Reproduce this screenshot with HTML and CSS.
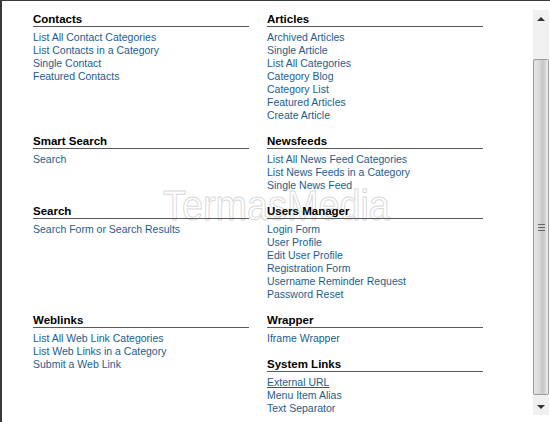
FILE: index.html
```html
<html>

<head>
    <link rel="stylesheet" href="styles.css">
</head>

<body>
    <div class="frame">
        <div class="watermark">TermasMedia</div>

        <div class="content">
            <div class="menu-grid">
                <div class="menu-cell">
                    <div class="menu-type">
                        <h3>Contacts</h3>
                        <ul>
                            <li><a href="#">List All Contact Categories</a></li>
                            <li><a href="#">List Contacts in a Category</a></li>
                            <li><a href="#">Single Contact</a></li>
                            <li><a href="#">Featured Contacts</a></li>
                        </ul>
                    </div>
                </div>
                <div class="menu-cell">
                    <div class="menu-type">
                        <h3>Articles</h3>
                        <ul>
                            <li><a href="#">Archived Articles</a></li>
                            <li><a href="#">Single Article</a></li>
                            <li><a href="#">List All Categories</a></li>
                            <li><a href="#">Category Blog</a></li>
                            <li><a href="#">Category List</a></li>
                            <li><a href="#">Featured Articles</a></li>
                            <li><a href="#">Create Article</a></li>
                        </ul>
                    </div>
                </div>

                <div class="menu-cell">
                    <div class="menu-type">
                        <h3>Smart Search</h3>
                        <ul>
                            <li><a href="#">Search</a></li>
                        </ul>
                    </div>
                </div>
                <div class="menu-cell">
                    <div class="menu-type">
                        <h3>Newsfeeds</h3>
                        <ul>
                            <li><a href="#">List All News Feed Categories</a></li>
                            <li><a href="#">List News Feeds in a Category</a></li>
                            <li><a href="#">Single News Feed</a></li>
                        </ul>
                    </div>
                </div>

                <div class="menu-cell">
                    <div class="menu-type">
                        <h3>Search</h3>
                        <ul>
                            <li><a href="#">Search Form or Search Results</a></li>
                        </ul>
                    </div>
                </div>
                <div class="menu-cell">
                    <div class="menu-type">
                        <h3>Users Manager</h3>
                        <ul>
                            <li><a href="#">Login Form</a></li>
                            <li><a href="#">User Profile</a></li>
                            <li><a href="#">Edit User Profile</a></li>
                            <li><a href="#">Registration Form</a></li>
                            <li><a href="#">Username Reminder Request</a></li>
                            <li><a href="#">Password Reset</a></li>
                        </ul>
                    </div>
                </div>

                <div class="menu-cell">
                    <div class="menu-type">
                        <h3>Weblinks</h3>
                        <ul>
                            <li><a href="#">List All Web Link Categories</a></li>
                            <li><a href="#">List Web Links in a Category</a></li>
                            <li><a href="#">Submit a Web Link</a></li>
                        </ul>
                    </div>
                </div>
                <div class="menu-cell">
                    <div class="menu-type">
                        <h3>Wrapper</h3>
                        <ul>
                            <li><a href="#">Iframe Wrapper</a></li>
                        </ul>
                    </div>
                    <div class="menu-type">
                        <h3>System Links</h3>
                        <ul>
                            <li><a href="#" class="active">External URL</a></li>
                            <li><a href="#">Menu Item Alias</a></li>
                            <li><a href="#">Text Separator</a></li>
                        </ul>
                    </div>
                </div>
            </div>
        </div>

        <div class="scrollbar">
            <div class="sb-button"><span class="arrow-up"></span></div>
            <div class="sb-track">
                <div class="sb-thumb">
                    <div class="grip">
                        <span></span>
                        <span></span>
                        <span></span>
                    </div>
                </div>
            </div>
            <div class="sb-button"><span class="arrow-down"></span></div>
        </div>
    </div>
</body>

</html>
```

FILE: styles.css
```css
body {
    margin: 0;
    padding: 0;
    background-color: #fff;
    font-family: "Liberation Sans", Arial, sans-serif;
}

.frame {
    position: relative;
    display: flex;
    height: 422px;
    box-sizing: border-box;
    border-left: 2px solid #3a3a3a;
    border-top: 1px solid #3a3a3a;
    overflow: hidden;
}

.watermark {
    position: absolute;
    left: 161px;
    top: 184px;
    font-size: 42px;
    line-height: 1;
    color: #fff;
    -webkit-text-stroke: 1px #d8d8d8;
    transform: scaleX(0.9);
    transform-origin: left top;
    white-space: nowrap;
}

.content {
    position: relative;
    flex: 1;
    padding: 11px 0 0 31px;
}

.menu-grid {
    display: grid;
    grid-template-columns: 216px 216px;
    column-gap: 18px;
}

.menu-type {
    margin-bottom: 12px;
}

.menu-type h3 {
    margin: 0;
    font-size: 11.5px;
    line-height: 14px;
    font-weight: bold;
    color: #000;
    border-bottom: 1px solid #5a5a5a;
}

.menu-type ul {
    list-style: none;
    margin: 4px 0 0;
    padding: 0;
}

.menu-type li {
    font-size: 10.5px;
    line-height: 13px;
}

.menu-type a {
    color: #1d5d8c;
    text-decoration: none;
}

.menu-type a.active {
    text-decoration: underline;
}

/* fake scrollbar */
.scrollbar {
    display: flex;
    flex-direction: column;
    width: 16px;
    height: 405px;
    margin-top: 9px;
    margin-right: 1px;
    background-color: #f0f0f0;
}

.sb-button {
    height: 17px;
    display: flex;
    align-items: center;
    justify-content: center;
    background-color: #f0f0f0;
}

.arrow-up {
    width: 0;
    height: 0;
    border-left: 4px solid transparent;
    border-right: 4px solid transparent;
    border-bottom: 4px solid #333;
}

.arrow-down {
    width: 0;
    height: 0;
    border-left: 4px solid transparent;
    border-right: 4px solid transparent;
    border-top: 4px solid #333;
}

.sb-track {
    flex: 1;
    padding: 32px 0 0;
}

.sb-thumb {
    height: 336px;
    box-sizing: border-box;
    border: 1px solid #9c9c9c;
    border-radius: 2px;
    background: linear-gradient(to right, #e4e4e4, #dadada 35%, #c6c6c6 60%, #d4d4d4 80%, #f2f2f2);
    display: flex;
    align-items: center;
    justify-content: center;
}

.grip {
    display: flex;
    flex-direction: column;
    gap: 2px;
}

.grip span {
    display: block;
    width: 7px;
    height: 1px;
    background-color: #666;
}
```
